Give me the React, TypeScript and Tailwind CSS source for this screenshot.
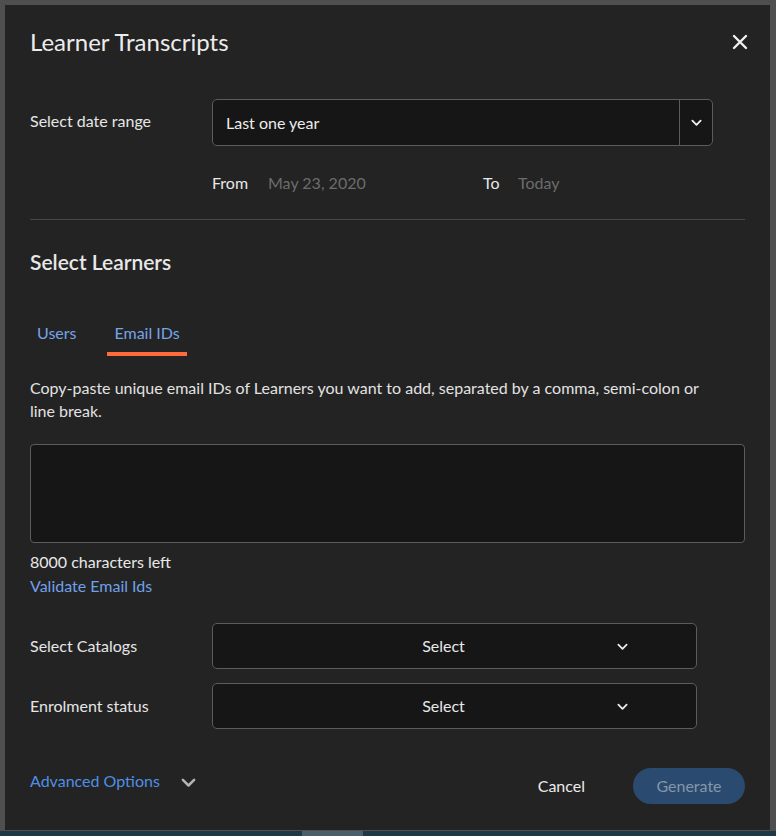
import { useState } from 'react';

const font = { fontFamily: 'Lato, "Noto Sans", sans-serif' };

const Chevron = ({ className = '' }: { className?: string }) => (
  <svg viewBox="0 0 12 8" className={className} fill="none" stroke="currentColor" strokeWidth="2" strokeLinecap="round" strokeLinejoin="round">
    <path d="M1.5 1.5 6 6l4.5-4.5" />
  </svg>
);

const SelectBox = ({ label }: { label: string }) => (
  <div className="flex items-center mt-[14px] first:mt-0">
    <div className="w-[182px] text-[16px] leading-6 text-[#e6e6e6]">{label}</div>
    <div className="relative w-[485px] h-[46px] rounded-[5px] border border-[#5c5c5c] bg-[#161616] flex items-center justify-center pr-[22px]">
      <span className="text-[16px] text-[#e8e8e8]">Select</span>
      <Chevron className="absolute left-[404px] top-[19px] w-[11px] h-[8px] text-[#e8e8e8]" />
    </div>
  </div>
);

export default function App() {
  const [tab, setTab] = useState<'users' | 'email'>('email');
  const [emails, setEmails] = useState('');

  return (
    <div className="w-[776px] h-[836px] flex flex-col bg-[#4f4f4f] overflow-hidden" style={font}>
      <div className="h-[831px] pt-[5px] pl-[5px] pr-[6px] pb-[1px]">
        <div className="h-full bg-[#232323] px-[25px] pt-[23px] text-[#e6e6e6]">
          {/* header */}
          <div className="flex items-center justify-between h-[28px]">
            <h1 className="text-[24px] leading-7 text-[#ececec]">Learner Transcripts</h1>
            <button className="mr-[-3px] text-[#f0f0f0]">
              <svg viewBox="0 0 16 16" className="w-[16px] h-[16px]" fill="none" stroke="currentColor" strokeWidth="2.4" strokeLinecap="round">
                <path d="M2 2l12 12M14 2 2 14" />
              </svg>
            </button>
          </div>

          {/* date range */}
          <div className="flex items-center mt-[43px]">
            <div className="w-[182px] text-[16px] leading-6 -mt-[3px]">Select date range</div>
            <div className="w-[501px] h-[47px] rounded-[5px] border border-[#5c5c5c] bg-[#161616] flex">
              <div className="flex-1 flex items-center pl-[13px] text-[16px] text-[#ececec]">Last one year</div>
              <div className="w-[33px] border-l border-[#5c5c5c] flex items-center justify-center">
                <Chevron className="w-[11px] h-[8px] text-[#f0f0f0]" />
              </div>
            </div>
          </div>
          <div className="flex items-center mt-[25px] pl-[182px] text-[16px] leading-6">
            <span className="w-[56px] text-[#e8e8e8]">From</span>
            <span className="w-[215px] text-[#6c6c6c]">May 23, 2020</span>
            <span className="w-[35px] text-[#e8e8e8]">To</span>
            <span className="text-[#6c6c6c]">Today</span>
          </div>
          <div className="mt-[24px] h-px bg-[#474747]" />

          {/* learners */}
          <h2 className="mt-[28px] text-[21px] leading-7 font-semibold text-[#e8e8e8]">Select Learners</h2>
          <div className="flex mt-[45px] gap-[24px]">
            <button
              onClick={() => setTab('users')}
              className={`px-[7px] pb-[7px] text-[16px] leading-6 text-[#76a5e8] border-b-4 ${tab === 'users' ? 'border-[#ff6b3d]' : 'border-transparent'}`}
            >
              Users
            </button>
            <button
              onClick={() => setTab('email')}
              className={`px-[7px] pb-[7px] text-[16px] leading-6 text-[#76a5e8] border-b-4 ${tab === 'email' ? 'border-[#ff6b3d]' : 'border-transparent'}`}
            >
              Email IDs
            </button>
          </div>
          <p className="mt-[20px] max-w-[680px] text-[16px] leading-[23px] text-[#e2e2e2]">
            Copy-paste unique email IDs of Learners you want to add, separated by a comma, semi-colon or line break.
          </p>
          <textarea
            value={emails}
            onChange={e => setEmails(e.target.value)}
            className="block mt-[22px] w-full h-[99px] rounded-[4px] border border-[#5c5c5c] bg-[#161616] resize-none outline-none p-3 text-[16px]"
          />
          <div className="mt-[7px] text-[16px] leading-6 text-[#e8e8e8]">{8000 - emails.length} characters left</div>
          <div className="text-[16px] leading-6 text-[#6fa1e9]">Validate Email Ids</div>

          {/* filters */}
          <div className="mt-[25px]">
            <SelectBox label="Select Catalogs" />
            <SelectBox label="Enrolment status" />
          </div>

          {/* footer */}
          <div className="mt-[39px] flex items-center justify-between">
            <div className="flex items-center gap-[21px] mb-[10px]">
              <span className="text-[16px] leading-6 text-[#4f8fe3]">Advanced Options</span>
              <Chevron className="w-[15px] h-[10px] text-[#b4b4b4] mt-[3px]" />
            </div>
            <div className="flex items-center gap-[48px]">
              <button className="text-[16px] text-[#ececec]">Cancel</button>
              <button className="w-[112px] h-[36px] rounded-full bg-[#2b4a6f] text-[16px] text-[#8596aa]">Generate</button>
            </div>
          </div>
        </div>
      </div>
      <div className="h-[5px] bg-[#1d3947] relative">
        <div className="absolute left-[302px] top-0 w-[61px] h-full bg-[#4b5f6a]" />
      </div>
    </div>
  );
}
